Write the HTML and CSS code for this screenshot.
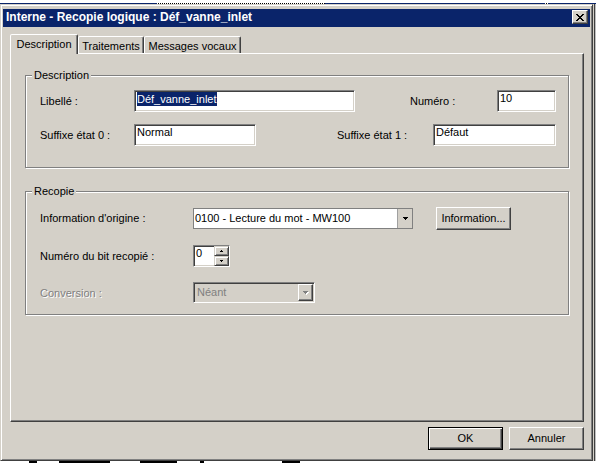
FILE: index.html
```html
<!DOCTYPE html>
<html lang="fr">
<head>
<meta charset="utf-8">
<title>Interne - Recopie logique</title>
<link rel="stylesheet" href="styles.css">
</head>
<body>
<div class="screen-top"></div>
<div class="desk">
  <div class="window">
    <div class="titlebar">
      <span class="title">Interne - Recopie logique : Déf_vanne_inlet</span>
      <div class="close">
        <svg width="8" height="7" viewBox="0 0 8 7" shape-rendering="crispEdges"><path d="M0 0h2v1h-2zM6 0h2v1h-2zM1 1h2v1h-2zM5 1h2v1h-2zM2 2h4v1h-4zM3 3h2v1h-2zM2 4h4v1h-4zM1 5h2v1h-2zM5 5h2v1h-2zM0 6h2v1h-2zM6 6h2v1h-2z" fill="#000"/></svg>
      </div>
    </div>
    <div class="client">
      <div class="tabs">
        <div class="tab sel t1">Description</div>
        <div class="tab t2">Traitements</div>
        <div class="tab t3">Messages vocaux</div>
      </div>
      <div class="panel">
        <div class="group g1">
          <div class="legend">Description</div>
          <div class="row r1">
            <span class="lab w94">Libellé :</span>
            <div class="edit e-lib"><span class="hl">Déf_vanne_inlet</span></div>
            <span class="lab lab-num">Numéro :</span>
            <div class="edit e-num">10</div>
          </div>
          <div class="row r2">
            <span class="lab w94">Suffixe état 0 :</span>
            <div class="edit e-s0">Normal</div>
            <span class="lab lab-s1">Suffixe état 1 :</span>
            <div class="edit e-s1">Défaut</div>
          </div>
        </div>
        <div class="group g2">
          <div class="legend">Recopie</div>
          <div class="row q1">
            <span class="lab w153">Information d'origine :</span>
            <div class="combo c-orig">
              <span class="val">0100 - Lecture du mot - MW100</span>
              <span class="dd"><svg width="5" height="3" viewBox="0 0 5 3" shape-rendering="crispEdges"><path d="M0 0h5v1h-5zM1 1h3v1h-3zM2 2h1v1h-1z" fill="#000"/></svg></span>
            </div>
            <div class="btn b-info">Information...</div>
          </div>
          <div class="row q2">
            <span class="lab w153">Numéro du bit recopié :</span>
            <div class="spin">
              <span class="num">0</span>
              <span class="updown">
                <span class="ud"><svg width="3" height="2" viewBox="0 0 3 2" shape-rendering="crispEdges"><path d="M1 0h1v1h-1zM0 1h3v1h-3z" fill="#000"/></svg></span>
                <span class="ud"><svg width="3" height="2" viewBox="0 0 3 2" shape-rendering="crispEdges"><path d="M0 0h3v1h-3zM1 1h1v1h-1z" fill="#000"/></svg></span>
              </span>
            </div>
          </div>
          <div class="row q3">
            <span class="lab w153 disabled">Conversion :</span>
            <div class="combo c-conv">
              <span class="val">Néant</span>
              <span class="dd dd-dis"><svg width="6" height="4" viewBox="0 0 6 4" shape-rendering="crispEdges"><path d="M1 1h5v1h-5zM2 2h3v1h-3zM3 3h1v1h-1z" fill="#fff"/><path d="M0 0h5v1h-5zM1 1h3v1h-3zM2 2h1v1h-1z" fill="#808080"/></svg></span>
            </div>
          </div>
        </div>
      </div>
      <div class="actions">
        <div class="btn def">OK</div>
        <div class="btn">Annuler</div>
      </div>
    </div>
  </div>
  <div class="screen-right"></div>
</div>
<div class="screen-bottom"></div>
</body>
</html>
```
FILE: styles.css
```css
* { box-sizing: border-box; }
html, body { margin: 0; padding: 0; }
body {
  width: 596px;
  height: 463px;
  overflow: hidden;
  background: #d4d0c8;
  font-family: "Liberation Sans", Arial, sans-serif;
  font-size: 11px;
  line-height: 13px;
  color: #000;
}

.screen-top {
  height: 4px;
  background-color: #fff;
  background-image:
    linear-gradient(to right, #0a246a 0 157px, transparent 157px 325px, #0a246a 325px 545px, transparent 545px 548px, #0a246a 548px),
    repeating-linear-gradient(to right, #000 0 1px, transparent 1px 2px);
  background-size: 100% 1px, 100% 1px;
  background-position: 0 3px, 0 3px;
  background-repeat: no-repeat;
}

.desk { display: flex; height: 457px; }

.screen-right {
  flex: 1;
  background: linear-gradient(to right, #d4d0c8 0 1px, #404040 1px 2px, #c0c0c0 2px);
}

.screen-bottom {
  height: 2px;
  background-color: #fff;
  background-image: linear-gradient(to right,
    transparent 0 29px, #000 29px 37px, transparent 37px 59px, #000 59px 110px,
    transparent 110px 140px, #000 140px 177px, transparent 177px 200px, #000 200px 204px,
    transparent 204px 282px, #000 282px 300px, transparent 300px);
}

.window {
  width: 593px;
  height: 457px;
  border: 1px solid;
  border-color: #d4d0c8 #404040 #404040 #d4d0c8;
  box-shadow: inset 1px 1px #fff, inset -1px -1px #808080;
  padding: 4px 2px 2px 2px;
  background: #d4d0c8;
  display: flex;
  flex-direction: column;
}

.titlebar {
  height: 18px;
  flex: none;
  background: #0a246a;
  display: flex;
  align-items: flex-start;
  justify-content: space-between;
}
.title {
  color: #fff;
  font-weight: bold;
  font-size: 12px;
  line-height: 16px;
  padding-left: 3px;
  white-space: nowrap;
}
.close {
  width: 16px;
  height: 14px;
  margin: 1px 2px 0 0;
  background: #d4d0c8;
  border: 1px solid;
  border-color: #fff #404040 #404040 #fff;
  box-shadow: inset -1px -1px #808080;
  display: flex;
  align-items: center;
  justify-content: center;
}
.close svg { display: block; }

.client { padding: 7px 0 0 7px; }

.tabs {
  display: flex;
  align-items: flex-end;
  height: 19px;
  position: relative;
  z-index: 1;
}
.tab {
  height: 17px;
  border: 1px solid;
  border-bottom: none;
  border-color: #fff #404040 transparent #fff;
  box-shadow: inset -1px 0 #808080;
  border-radius: 2px 2px 0 0;
  padding-top: 3px;
  text-align: center;
  white-space: nowrap;
  background: #d4d0c8;
}
.tab.sel { height: 20px; margin-bottom: -1px; }
.t1 { width: 68px; }
.t2 { width: 66px; }
.t3 { width: 97px; }

.panel {
  width: 574px;
  height: 369px;
  border: 1px solid;
  border-color: #fff #404040 #404040 #fff;
  box-shadow: inset -1px -1px #808080;
  padding: 21px 0 0 14px;
}

.group {
  width: 544px;
  border: 1px solid #808080;
  box-shadow: inset 1px 1px #fff, 1px 1px #fff;
  padding: 0 0 0 14px;
}
.g1 { height: 93px; }
.g2 { height: 124px; margin-top: 23px; }

.legend {
  margin: -7px 0 0 -8px;
  padding: 0 2px;
  height: 13px;
  width: max-content;
  background: #d4d0c8;
}

.row { display: flex; align-items: center; }
.g1 .row { height: 22px; }
.r1 { margin-top: 8px; }
.r2 { margin-top: 12px; }
.q1 { margin-top: 9px; height: 23px; }
.q2 { margin-top: 15px; height: 22px; }
.q3 { margin-top: 15px; height: 22px; align-items: flex-start; }

.lab { white-space: nowrap; flex: none; }
.q3 .lab { padding-top: 5px; }
.w94 { width: 94px; }
.w153 { width: 153px; }
.lab-num { margin-left: 55px; width: 87px; }
.lab-s1 { margin-left: 81px; width: 96px; }
.disabled { color: #808080; text-shadow: 1px 1px 0 #fff; }

.edit {
  height: 22px;
  flex: none;
  background: #fff;
  border: 1px solid;
  border-color: #808080 #fff #fff #808080;
  box-shadow: inset 1px 1px #404040, inset -1px -1px #d4d0c8;
  padding: 1px 2px;
  white-space: nowrap;
  overflow: hidden;
}
.e-lib { width: 221px; }
.e-num { width: 59px; }
.e-s0 { width: 122px; }
.e-s1 { width: 123px; }
.hl {
  display: inline-block;
  vertical-align: top;
  line-height: 14px;
  background: #0a246a;
  color: #fff;
}

.combo {
  height: 21px;
  flex: none;
  display: flex;
  background: #fff;
  border: 1px solid #808080;
}
.combo .val { flex: 1; padding-left: 1px; line-height: 19px; white-space: nowrap; overflow: hidden; }
.c-orig { width: 220px; }
.dd {
  width: 15px;
  flex: none;
  background: #d4d0c8;
  border-left: 1px solid #a0a0a0;
  display: flex;
  align-items: center;
  justify-content: center;
}
.dd svg, .ud svg { display: block; }

.c-conv {
  width: 122px;
  background: #d4d0c8;
  border-color: #808080 #fff #fff #808080;
  box-shadow: inset 1px 1px #404040, inset -1px -1px #d4d0c8;
  padding: 1px;
}
.c-conv .val { color: #808080; padding-left: 2px; line-height: 17px; }
.dd-dis {
  border: 1px solid;
  border-color: #fff #404040 #404040 #fff;
  box-shadow: inset -1px -1px #808080;
  width: 15px;
}

.btn {
  width: 75px;
  height: 23px;
  flex: none;
  background: #d4d0c8;
  border: 1px solid;
  border-color: #fff #404040 #404040 #fff;
  box-shadow: inset -1px -1px #808080;
  display: flex;
  align-items: center;
  justify-content: center;
  white-space: nowrap;
}
.btn.def {
  border-color: #000;
  box-shadow: inset 1px 1px #fff, inset -1px -1px #404040, inset -2px -2px #808080;
}
.b-info { margin-left: 23px; }

.spin {
  width: 37px;
  height: 22px;
  flex: none;
  display: flex;
  background: #fff;
  border: 1px solid;
  border-color: #808080 #fff #fff #808080;
  box-shadow: inset 1px 1px #404040, inset -1px -1px #d4d0c8;
}
.spin .num { flex: 1; padding: 1px 0 0 2px; }
.updown { width: 15px; display: flex; flex-direction: column; }
.ud {
  flex: 1;
  background: #d4d0c8;
  border: 1px solid;
  border-color: #d4d0c8 #404040 #404040 #d4d0c8;
  box-shadow: inset 1px 1px #fff, inset -1px -1px #808080;
  display: flex;
  align-items: center;
  justify-content: center;
}

.actions {
  display: flex;
  justify-content: flex-end;
  gap: 6px;
  width: 574px;
  margin-top: 5px;
}
```
